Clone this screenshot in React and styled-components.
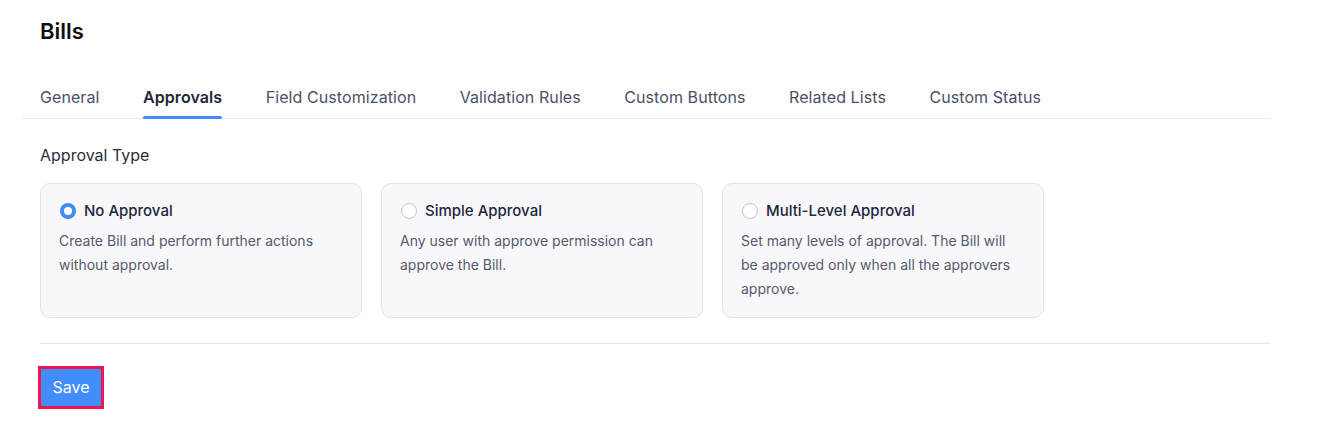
import React from 'react'
import styled, { createGlobalStyle } from 'styled-components'

const Global = createGlobalStyle`
  body {
    margin: 0;
    background: #fff;
    font-family: Inter, "Noto Sans", sans-serif;
    -webkit-font-smoothing: antialiased;
  }
`

const Page = styled.div`
  padding: 0 56px 0 22px;
  width: 1326px;
  box-sizing: border-box;
`

const Title = styled.h1`
  margin: 0;
  padding: 17px 0 0 18px;
  font-size: 22px;
  font-weight: 600;
  line-height: 28px;
  color: #111;
`

const Tabs = styled.div`
  display: flex;
  gap: 43.5px;
  margin-top: 42px;
  padding-left: 18px;
  border-bottom: 1px solid #ebebef;
`

const Tab = styled.div`
  position: relative;
  font-size: 16px;
  line-height: 20px;
  letter-spacing: 0.08px;
  padding-bottom: 11px;
  color: ${p => (p.active ? '#21263c' : '#4b5068')};
  font-weight: ${p => (p.active ? 600 : 400)};

  &::after {
    content: '';
    display: ${p => (p.active ? 'block' : 'none')};
    position: absolute;
    left: 0;
    right: 0;
    bottom: -1px;
    height: 3px;
    border-radius: 2px;
    background: #408dfb;
  }
`

const Body = styled.div`
  padding-left: 18px;
`

const Label = styled.div`
  margin-top: 25px;
  font-size: 16px;
  line-height: 22px;
  color: #2c2f3a;
`

const Cards = styled.div`
  display: flex;
  gap: 19px;
  margin-top: 17px;
`

const Card = styled.div`
  width: 322px;
  height: 135px;
  box-sizing: border-box;
  padding: 17px 19px 17px 18px;
  background: #f8f8fb;
  border: 1px solid #e3e3ea;
  border-radius: 10px;
`

const CardHead = styled.div`
  display: flex;
  align-items: center;
  gap: 8px;
  font-size: 15px;
  font-weight: 500;
  color: #21263c;
  line-height: 20px;
  padding-left: 1px;
`

const Radio = styled.span`
  width: 16px;
  height: 16px;
  box-sizing: border-box;
  border-radius: 50%;
  background: #fff;
  border: ${p => (p.checked ? '4.5px solid #408dfb' : '1px solid #c4c6cf')};
`

const Desc = styled.p`
  margin: 8px 0 0;
  font-size: 14px;
  line-height: 24px;
  color: #555a6e;
`

const Divider = styled.div`
  margin-top: 25px;
  border-top: 1px solid #e8e8ec;
`

const SaveWrap = styled.div`
  display: inline-block;
  margin: 22px 0 0 -2px;
  border: 3px solid #f0144f;
`

const SaveButton = styled.button`
  display: block;
  border: none;
  background: #408dfb;
  color: #fff;
  font-family: inherit;
  font-size: 16px;
  line-height: 20px;
  padding: 8px 10px 9px;
  width: 60px;
`

const tabs = [
  'General',
  'Approvals',
  'Field Customization',
  'Validation Rules',
  'Custom Buttons',
  'Related Lists',
  'Custom Status',
]

const options = [
  {
    title: 'No Approval',
    desc: 'Create Bill and perform further actions without approval.',
    checked: true,
  },
  {
    title: 'Simple Approval',
    desc: 'Any user with approve permission can approve the Bill.',
  },
  {
    title: 'Multi-Level Approval',
    desc: 'Set many levels of approval. The Bill will be approved only when all the approvers approve.',
  },
]

export default function App() {
  return (
    <Page>
      <Global />
      <Title>Bills</Title>
      <Tabs>
        {tabs.map(t => (
          <Tab key={t} active={t === 'Approvals'}>{t}</Tab>
        ))}
      </Tabs>
      <Body>
        <Label>Approval Type</Label>
        <Cards>
          {options.map(o => (
            <Card key={o.title}>
              <CardHead>
                <Radio checked={o.checked} />
                {o.title}
              </CardHead>
              <Desc>{o.desc}</Desc>
            </Card>
          ))}
        </Cards>
        <Divider />
        <SaveWrap>
          <SaveButton>Save</SaveButton>
        </SaveWrap>
      </Body>
    </Page>
  )
}
